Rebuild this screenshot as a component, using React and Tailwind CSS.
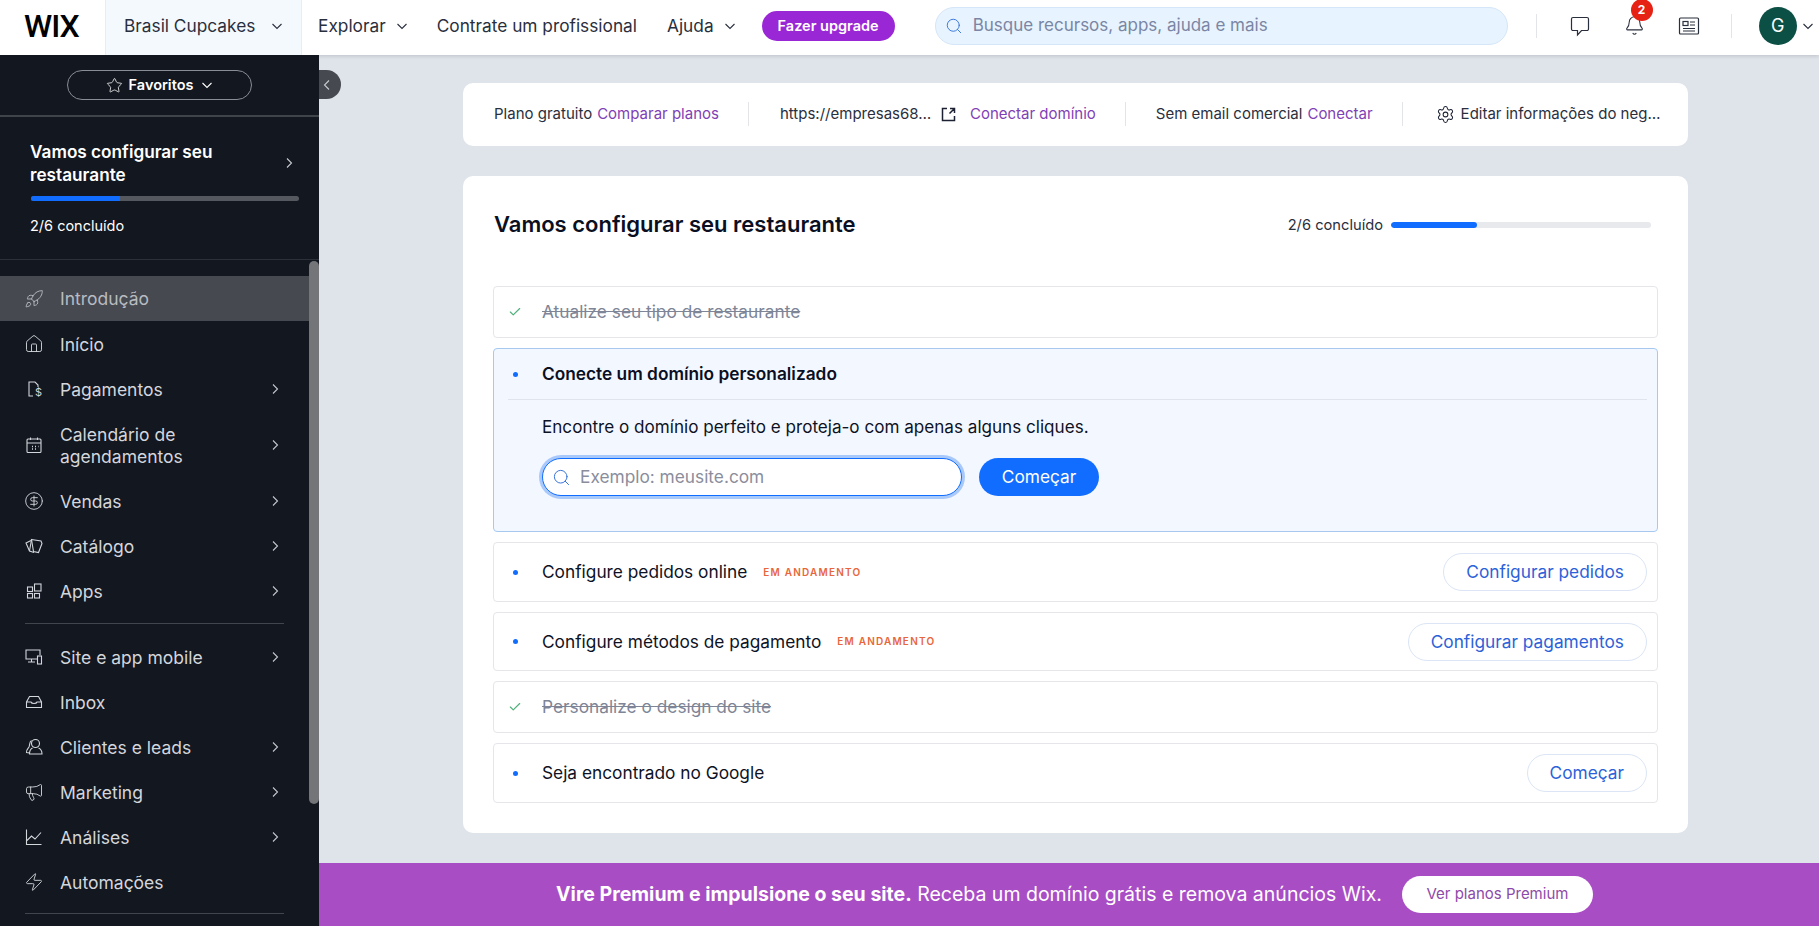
import React from "react";
import { Rocket, House, CircleDollarSign, Megaphone, Zap, Settings, Search, Star, Check, Bell } from "lucide-react";

const Chev = ({ dir = "right", className = "" }) => (
  <svg width="12" height="12" viewBox="0 0 12 12" fill="none" stroke="currentColor" strokeWidth="1.1" className={className}>
    {dir === "right" && <path d="M4 1.500 8.500 6 4 10.500" />}
    {dir === "down" && <path d="M1.500 4 6 8.500 10.500 4" />}
    {dir === "left" && <path d="M8 1.500 3.500 6 8 10.500" />}
  </svg>
);

const s = { width: 20, height: 20, viewBox: "0 0 20 20", fill: "none", stroke: "currentColor", strokeWidth: 1.1 };
const IcPay = () => (
  <svg {...s}>
    <path d="M9 17H5V3h6l3 3v2" />
    <text x="11" y="17" fontSize="11" fill="currentColor" stroke="none" fontFamily="Inter, sans-serif">$</text>
  </svg>
);
const IcCal = () => (
  <svg {...s}>
    <rect x="3" y="4" width="14" height="13.500" rx="1" />
    <path d="M3 8h14M6.500 2.500V5M13.500 2.500V5" />
    <path d="M8 11.500h1M11 11.500h1M14 11.500h.5M8 14h1M11 14h1" strokeWidth="1.300" />
  </svg>
);
const IcCards = () => (
  <svg {...s}>
    <path d="M7 4.500 2 7l3.500 8 4.500 1.500" />
    <path d="M7.500 3.500 17 5l1 2.500-3.500 9-5-1z" />
    <path d="M7.500 3.500 5.500 15" />
  </svg>
);
const IcApps = () => (
  <svg {...s}>
    <rect x="3.500" y="6" width="5" height="4.500" />
    <rect x="3.500" y="12.500" width="5" height="4.500" />
    <rect x="10.500" y="12.500" width="5" height="4.500" />
    <rect x="10.500" y="3" width="6.500" height="7" />
  </svg>
);
const IcSite = () => (
  <svg {...s}>
    <path d="M13 12H2V3h14v5M7.500 12v3M4 15h7" />
    <rect x="13.500" y="9" width="4" height="8" />
  </svg>
);
const IcInbox = () => (
  <svg {...s}>
    <path d="M2.500 10v5.500h15V10l-3-5.500h-9zM2.500 10h4.500c.5 2 5.500 2 6 0h4.500" />
  </svg>
);
const IcPeople = () => (
  <svg {...s}>
    <circle cx="11.500" cy="6.500" r="4" />
    <path d="M8.500 11c-2 1-3 3.500-3 6h12.500c0-2.500-1-5-3.500-6M7.500 3.500C5 5 6 8 5 10c-1 1.500-3 3-2.500 5.500l3 .5" />
  </svg>
);
const IcChart = () => (
  <svg {...s}>
    <path d="M2.500 2.500v15h15M3 13.500l4.500-4.500 3.500 3 6-6.500" />
  </svg>
);
const IcChat = () => (
  <svg width="22" height="22" viewBox="0 0 22 22" fill="none" stroke="currentColor" strokeWidth="1.200">
    <path d="M4 2.500h14a1.500 1.500 0 0 1 1.500 1.500v10a1.500 1.500 0 0 1-1.500 1.500h-5.500L8.500 20v-4.500H4A1.500 1.500 0 0 1 2.500 14V4A1.500 1.500 0 0 1 4 2.500z" />
  </svg>
);
const IcNews = () => (
  <svg width="22" height="22" viewBox="0 0 22 22" fill="none" stroke="currentColor" strokeWidth="1.200">
    <rect x="1.500" y="3" width="19" height="16" rx="1" />
    <rect x="5" y="6.500" width="5" height="4" />
    <path d="M12 7h5M12 10h5M5 13.500h12M5 16h12" />
  </svg>
);
const IcExt = () => (
  <svg width="15" height="15" viewBox="0 0 15 15" fill="none" stroke="#1c2233" strokeWidth="1.500" className="ml-[8px] shrink-0">
    <path d="M6 1.500H1.500v12h12V9M8.500 6.500l4.500-4.500M9 1.500h4.500V6" />
  </svg>
);

const nav1 = [
  { t: "Início", I: House },
  { t: "Pagamentos", I: IcPay, c: 1 },
  { t: "Calendário de agendamentos", I: IcCal, c: 1, tall: 1 },
  { t: "Vendas", I: CircleDollarSign, c: 1 },
  { t: "Catálogo", I: IcCards, c: 1 },
  { t: "Apps", I: IcApps, c: 1 },
];
const nav2 = [
  { t: "Site e app mobile", I: IcSite, c: 1 },
  { t: "Inbox", I: IcInbox },
  { t: "Clientes e leads", I: IcPeople, c: 1 },
  { t: "Marketing", I: Megaphone, c: 1 },
  { t: "Análises", I: IcChart, c: 1 },
  { t: "Automações", I: Zap },
];

function NavRow({ t, I, c, tall }) {
  return (
    <div className={`flex items-center pl-[24px] pr-[28px] text-[#d3d6db] ${tall ? "h-[67px]" : "h-[45px]"}`}>
      <span className="w-[36px] shrink-0 flex">
        <I size={20} strokeWidth={1.1} />
      </span>
      <span className="flex-1 text-[17.500px] leading-[22px] pr-[60px] pt-[2px]">{t}</span>
      {c && <Chev className="text-[#c4c7cc]" />}
    </div>
  );
}

function Row({ done, title, tag, btn, h }) {
  return (
    <div className={`flex items-center border border-[#e4e6ea] rounded-[4px] pl-[14px] pr-[10px] ${h}`}>
      <span className="w-[34px] shrink-0 flex">
        {done ? (
          <Check size={14} strokeWidth={2} className="text-[#4eb07a]" />
        ) : (
          <span className="ml-[5px] w-[5px] h-[5px] rounded-full bg-[#116dff]" />
        )}
      </span>
      <span className={`text-[17.300px] ${done ? "line-through text-[#7d8597]" : "text-[#0d1224]"}`}>{title}</span>
      {tag && <span className="ml-[16px] text-[10px] font-semibold tracking-[1.200px] text-[#e8663a]">EM ANDAMENTO</span>}
      {btn && (
        <span className="ml-auto h-[38px] px-[22px] flex items-center rounded-full border border-[#dbe5f5] text-[#2b62d9] text-[17.300px]">
          {btn}
        </span>
      )}
    </div>
  );
}

const Sep = ({ className = "" }) => <span className={`block w-px h-[24px] bg-[#e2e4e8] shrink-0 ${className}`} />;

export default function App() {
  return (
    <div className="relative h-[926px] w-[1819px] overflow-hidden flex flex-col font-['Inter',sans-serif] bg-[#dfe3ea]">
      <header className="h-[55px] shrink-0 bg-white flex items-center pb-[4px] text-[#2a2f3d] text-[17.300px] shadow-[0_1px_4px_rgba(0,0,0,0.15)] z-10">
        <span className="w-[105px] pl-[24px] font-['Roboto',sans-serif] font-medium text-[32px] tracking-[-1px] text-black leading-none">WIX</span>
        <div className="w-[197px] h-[55px] -mb-[4px] pb-[4px] flex items-center justify-between pl-[18px] pr-[18px] bg-[#f4f9fe] border-x border-[#e6edf5]">
          <span>Brasil Cupcakes</span>
          <Chev dir="down" />
        </div>
        <div className="flex items-center gap-[10px] ml-[16px]">
          <span>Explorar</span>
          <Chev dir="down" />
        </div>
        <span className="ml-[29px]">Contrate um profissional</span>
        <div className="flex items-center gap-[10px] ml-[30px]">
          <span>Ajuda</span>
          <Chev dir="down" />
        </div>
        <span className="ml-[26px] w-[133px] h-[30px] rounded-full bg-[#9a27d5] text-white text-[14.500px] font-semibold flex items-center justify-center">Fazer upgrade</span>
        <div className="ml-[40px] w-[573px] h-[38px] rounded-full bg-[#e7f3ff] border border-[#d5e6f8] flex items-center pl-[9px] gap-[10px] text-[#7a86a3] text-[17px]">
          <Search size={18} strokeWidth={1.2} className="text-[#2f6fd6]" />
          <span>Busque recursos, apps, ajuda e mais</span>
        </div>
        <Sep className="ml-[28px]" />
        <div className="ml-[32px] flex items-center gap-[33px]">
          <IcChat />
          <div className="relative flex">
            <Bell size={21} strokeWidth={1.2} />
            <span className="absolute left-[7px] top-[-16px] w-[22px] h-[22px] rounded-full bg-[#e62214] text-white text-[12px] font-bold flex items-center justify-center">2</span>
          </div>
          <IcNews />
        </div>
        <Sep className="ml-[31px]" />
        <span className="ml-[27px] w-[38px] h-[38px] rounded-full bg-[#0b4f45] text-white text-[18px] flex items-center justify-center">G</span>
        <Chev dir="down" className="ml-[5px]" />
      </header>

      <div className="flex-1 flex min-h-0">
        <aside className="relative w-[319px] shrink-0 bg-[#131720] text-white overflow-hidden">
          <div className="h-[62px] flex items-center justify-center border-b-2 border-[#3f434a]">
            <div className="w-[185px] h-[30px] rounded-full border border-[#8a8d93] flex items-center justify-center gap-[6px] text-[14.500px] font-semibold">
              <Star size={17} strokeWidth={1.1} />
              <span>Favoritos</span>
              <Chev dir="down" className="ml-[2px]" />
            </div>
          </div>
          <div className="h-[143px] pl-[30px] pr-[31px] pt-[23px] border-b border-[#2c3038]">
            <div className="flex items-center justify-between -mr-[7px]">
              <div className="text-[17.200px] font-semibold leading-[23px] w-[200px]">Vamos configurar seu restaurante</div>
              <Chev className="text-[#c8cad0]" />
            </div>
            <div className="mt-[10px] -mr-[11px] ml-[1px] h-[5px] rounded-full bg-[#55585f] overflow-hidden">
              <div className="h-full w-[89px] bg-[#116dff]" />
            </div>
            <div className="mt-[14px] text-[14.500px]">2/6 concluído</div>
          </div>
          <div className="flex">
            <div className="w-[309px] shrink-0 pt-[16px]">
              <div className="h-[45px] flex items-center pl-[24px] bg-[#46494f] text-[#b8bbc1]">
                <span className="w-[36px] flex"><Rocket size={20} strokeWidth={1.1} /></span>
                <span className="text-[17.500px] pt-[2px]">Introdução</span>
              </div>
              {nav1.map((n) => <NavRow key={n.t} {...n} />)}
              <div className="mx-[25px] my-[10px] h-px bg-[#41454c]" />
              {nav2.map((n) => <NavRow key={n.t} {...n} />)}
              <div className="mx-[25px] mt-[9px] h-px bg-[#41454c]" />
            </div>
            <div className="w-[10px] h-[543px] rounded-[6px] bg-[#737579] mt-[1px]" />
          </div>
        </aside>

        <main className="flex-1 flex flex-col min-w-0">
          <div className="flex-1 pl-[144px] pr-[131px] pt-[28px]">
            <div className="h-[63px] bg-white rounded-[10px] flex items-center pl-[31px] pb-[1px] text-[15px] text-[#2a2f3d]">
              <span>Plano gratuito</span>
              <span className="ml-[5px] text-[#7f3fb5]">Comparar planos</span>
              <Sep className="ml-[29px]" />
              <span className="ml-[31px] w-[153px] truncate">https://empresas68…</span>
              <IcExt />
              <span className="ml-[14px] text-[#7f3fb5]">Conectar domínio</span>
              <Sep className="ml-[29px]" />
              <span className="ml-[30px]">Sem email comercial</span>
              <span className="ml-[5px] text-[#7f3fb5]">Conectar</span>
              <Sep className="ml-[29px]" />
              <Settings size={19} strokeWidth={1.3} className="ml-[33px] text-[#1c2233]" />
              <span className="ml-[6px]">Editar informações do neg…</span>
            </div>

            <div className="mt-[30px] h-[657px] bg-white rounded-[10px] px-[30px]">
              <div className="h-[96px] flex items-center justify-between pr-[7px] pl-[1px] pt-[0px]">
                <h1 className="text-[22px] font-semibold text-[#0a0f22]">Vamos configurar seu restaurante</h1>
                <div className="flex items-center gap-[8px] text-[14.700px] text-[#2a2f3d] pt-[2px]">
                  <span>2/6 concluído</span>
                  <div className="w-[260px] h-[6px] rounded-full bg-[#e8e9ec] overflow-hidden">
                    <div className="h-full w-[86px] rounded-full bg-[#116dff]" />
                  </div>
                </div>
              </div>

              <div className="mt-[14px] flex flex-col gap-[10px]">
                <Row done title="Atualize seu tipo de restaurante" h="h-[52px]" />
                <div className="h-[184px] border border-[#a9c8f0] rounded-[4px] bg-[#f3f7ff] pl-[14px] pr-[10px]">
                  <div className="h-[51px] flex items-center border-b border-[#e0e4ec]">
                    <span className="w-[34px] shrink-0 flex"><span className="ml-[5px] w-[5px] h-[5px] rounded-full bg-[#116dff]" /></span>
                    <span className="text-[17.300px] font-semibold text-[#0a0f22]">Conecte um domínio personalizado</span>
                  </div>
                  <div className="pl-[34px]">
                    <p className="mt-[15px] text-[17.100px] leading-[24px] text-[#0d1224]">Encontre o domínio perfeito e proteja-o com apenas alguns cliques.</p>
                    <div className="mt-[19px] flex items-center gap-[17px]">
                      <div className="w-[420px] h-[38px] rounded-full bg-white border border-[#116dff] ring-[3px] ring-[#a9c9fb] flex items-center pl-[9px] gap-[9px] text-[17.300px] text-[#8a8d9c]">
                        <Search size={19} strokeWidth={1.2} className="text-[#2f6fd6]" />
                        <span>Exemplo: meusite.com</span>
                      </div>
                      <span className="w-[120px] h-[38px] rounded-full bg-[#116dff] text-white text-[17.300px] flex items-center justify-center">Começar</span>
                    </div>
                  </div>
                </div>
                <Row title="Configure pedidos online" tag btn="Configurar pedidos" h="h-[60px]" />
                <Row title="Configure métodos de pagamento" tag btn="Configurar pagamentos" h="h-[59px]" />
                <Row done title="Personalize o design do site" h="h-[52px]" />
                <Row title="Seja encontrado no Google" btn="Começar" h="h-[60px]" />
              </div>
            </div>
          </div>

          <div className="h-[63px] shrink-0 bg-[#a94dc5] flex items-center justify-center text-white text-[19.500px] pl-[11px]">
            <span><b className="font-bold">Vire Premium e impulsione o seu site.</b> Receba um domínio grátis e remova anúncios Wix.</span>
            <span className="ml-[20px] w-[191px] h-[37px] rounded-full bg-white text-[#8d4aa8] text-[15px] flex items-center justify-center">Ver planos Premium</span>
          </div>
        </main>
      </div>

      <div className="absolute left-[319px] top-[70px] w-[22px] h-[29px] rounded-r-full bg-[#46494f] text-[#c9cbd0] flex items-center pl-[2px] z-20">
        <Chev dir="left" />
      </div>
    </div>
  );
}
